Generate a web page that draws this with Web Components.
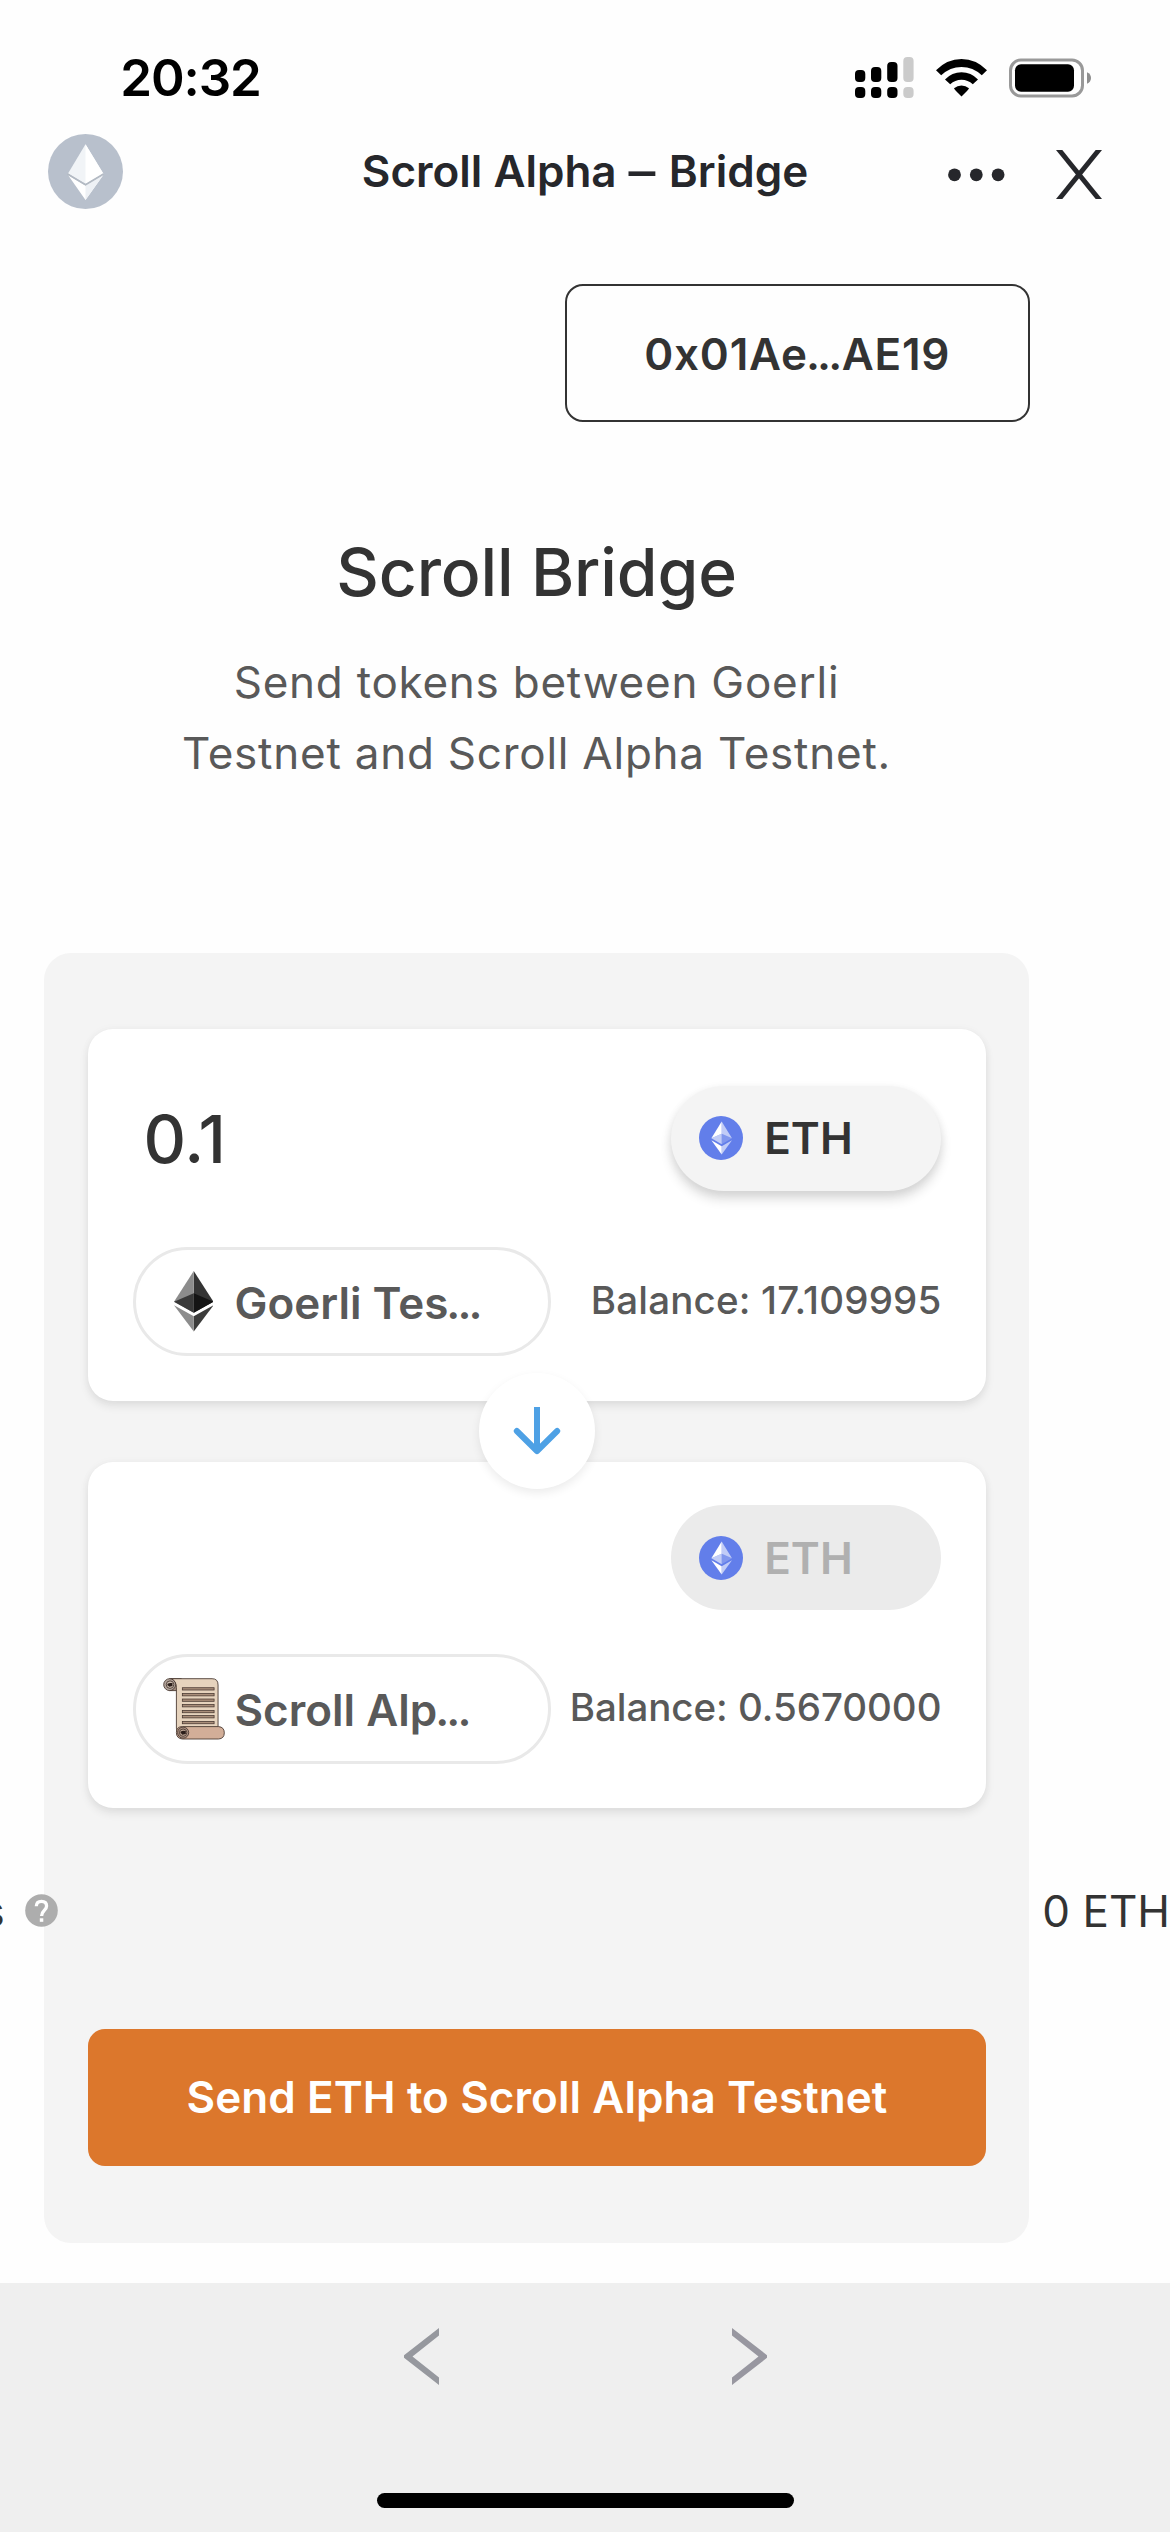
<!DOCTYPE html>
<html lang="en">
<head>
<meta charset="utf-8">
<title>Scroll Alpha – Bridge</title>
<style>
body{margin:0;width:1170px;height:2532px;overflow:hidden;background:#fefefe;font-family:Inter,"Liberation Sans",sans-serif;color:#333}
</style>
</head>
<body>
<bridge-app></bridge-app>
<script>
function define(name, html) {
  const t = document.createElement('template');
  t.innerHTML = html;
  customElements.define(name, class extends HTMLElement {
    constructor() {
      super();
      this.attachShadow({ mode: 'open' }).appendChild(t.content.cloneNode(true));
    }
  });
}

define('status-bar', `<style>
:host{display:flex;box-sizing:border-box;height:134px;padding:21px 79px 0 120.300px;align-items:center;justify-content:space-between;color:#000}
.time{font-size:51px;font-weight:600;letter-spacing:-1.100px;white-space:nowrap}
.icons{display:flex;align-items:center;gap:22px}
svg{display:block}
</style>
<span class="time">20:32</span>
<div class="icons">
<svg width="59" height="42" viewBox="0 0 59 42"><g><rect x="0" y="13" width="10.3" height="12" rx="4"/><rect x="16" y="10" width="10.3" height="15" rx="4"/><rect x="32.2" y="5" width="10.3" height="20" rx="4"/><rect x="0" y="30" width="10.3" height="11" rx="4"/><rect x="16" y="30" width="10.3" height="11" rx="4"/><rect x="32.2" y="30" width="10.3" height="11" rx="4"/></g><g fill="#cbcbcb"><rect x="48.3" y="0" width="10.3" height="25" rx="4"/><rect x="48.3" y="30" width="10.3" height="11" rx="4"/></g></svg>
<svg width="51" height="38" viewBox="0 0 51 38"><path d="M0 11.3Q11 0 25.5 0T51 11.3L45.8 16.2Q37 7.9 25.5 7.9T5.2 16.2Z"/><path d="M9 20.4Q16 13.2 25.5 13.2T42 20.4L36.8 25.3Q32 20.8 25.5 20.8T14.2 25.3Z"/><path d="M18 29.3Q21.4 26.4 25.5 26.4T33 29.3Q33.2 30 25.5 37.6Q17.800 30 18 29.300Z"/></svg>
<svg width="82" height="40" viewBox="0 0 82 40"><rect x="1.5" y="2" width="72" height="36" rx="10.500" fill="none" stroke="#999" stroke-width="3"/><rect x="6" y="6.300" width="59" height="27.400" rx="6"/><path d="M78 14.200Q82 16 82 20T78 25.800Z" fill="#8e8e8e"/></svg>
</div>`);

define('browser-header', `<style>
:host{display:grid;grid-template-columns:1fr auto 1fr;height:75px;align-items:center;color:#26272b}
h1{margin:0;font-size:44px;font-weight:600;letter-spacing:0;line-height:60px;white-space:nowrap;padding-bottom:1px}
.dash{display:inline-block;margin:0 5px 0 3px;transform:scaleX(1.22)}
.left{display:flex;padding-left:48px}
.actions{display:flex;justify-content:flex-end;align-items:center;gap:51px;padding:6px 68px 0 0}
svg{display:block}
</style>
<div class="left"><svg width="75" height="75" viewBox="0 0 75 75"><circle cx="37.500" cy="37.500" r="37.500" fill="#b8c0cc"/><path fill="#f1f4f7" d="M20 39.500L37.500 50 55.300 39.500 37.500 10.300z"/><path fill="#fff" d="M37.500 10.300V50L55.300 39.500z"/><path fill="#fff" d="M20 41L37.500 51.500 55.300 41 37.500 66z"/><path fill="#eef1f5" d="M37.500 51.500L55.300 41 37.500 66z"/><path fill="none" stroke="#b3bac3" stroke-width="1.600" d="M19.500 40L37.500 50.700 55.500 40"/></svg></div>
<h1>Scroll Alpha <span class="dash">–</span> Bridge</h1>
<div class="actions">
<svg width="57" height="14" viewBox="0 0 57 14" fill="#26272b"><circle cx="6.500" cy="6.800" r="6.400"/><circle cx="28.300" cy="6.800" r="6.400"/><circle cx="50.100" cy="6.800" r="6.400"/></svg>
<svg width="46" height="49" viewBox="0 0 46 49" fill="#26272b"><path d="M0 0H6.300L46 49H39.700Z"/><path d="M46 0H39.700L0 49H6.300Z"/></svg>
</div>`);

define('wallet-button', `<style>
:host{display:flex;justify-content:flex-end;margin:75px 140px 0 0;--trail-end:2.500px}
button{all:unset;box-sizing:border-box;width:465.500px;height:138px;border:2.500px solid #333;border-radius:18px;text-align:center;line-height:136px;font-size:44px;font-weight:600;letter-spacing:.750px;white-space:nowrap}
</style><button><slot></slot></button>`);

define('page-hero', `<style>
:host{display:block;width:985px;margin:110px 0 0 44px;text-align:center}
h2{margin:0;font-size:66px;line-height:80px;font-weight:500;letter-spacing:-.150px;white-space:nowrap}
p{margin:35px 0 0;font-size:44px;line-height:70.500px;letter-spacing:.760px;color:#595959;font-weight:400;white-space:nowrap}
</style><h2><slot name="title"></slot></h2><p><slot></slot></p>`);

define('dot-trail', `<style>:host{display:inline;letter-spacing:-2.900px;margin-left:-2px;margin-right:var(--trail-end,0)}</style><slot></slot>`);

define('eth-icon', `<style>:host{display:block;width:44px;height:44px}svg{display:block}</style>
<svg width="44" height="44" viewBox="0 0 32 32"><circle cx="16" cy="16" r="16" fill="#627eea"/><g fill="#fff"><path fill-opacity=".602" d="M16.498 4v8.870l7.497 3.350z"/><path d="M16.498 4L9 16.220l7.498-3.350z"/><path fill-opacity=".602" d="M16.498 21.968v6.027L24 17.616z"/><path d="M16.498 27.995v-6.028L9 17.616z"/><path fill-opacity=".2" d="M16.498 20.573l7.497-4.353-7.497-3.348z"/><path fill-opacity=".602" d="M9 16.220l7.498 4.353v-7.701z"/></g></svg>`);

define('token-chip', `<style>
:host{display:flex;box-sizing:border-box;width:270.500px;height:104.700px;border-radius:53px;padding-left:28px;align-items:center;gap:21.700px;background:#f4f4f4;box-shadow:0 8px 12px rgba(0,0,0,.14),0 2px 10px rgba(0,0,0,.06);font-size:44px;font-weight:600;letter-spacing:0;color:#333}
:host([disabled]){background:#ebebeb;color:#b0b0b0;box-shadow:none}
</style><eth-icon></eth-icon><span><slot></slot></span>`);

define('goerli-icon', `<style>:host{display:block}svg{display:block}</style>
<svg width="39.500" height="60.500" viewBox="0 0 784.370 1277.390" preserveAspectRatio="none"><path fill="#343434" d="M392 0V882L784 650z"/><path fill="#8c8c8c" d="M392 0L0 650 392 882z"/><path fill="#3c3c3b" d="M392 956V1277L784 725z"/><path fill="#8c8c8c" d="M392 1277V956L0 725z"/><path fill="#141414" d="M392 882L784 650 392 472z"/><path fill="#393939" d="M0 650L392 882V472z"/></svg>`);

define('scroll-icon', `<style>:host{display:block}svg{display:block}</style>
<svg width="62" height="62" viewBox="-.500 -.500 62.500 62.500" stroke="#4a3a33" stroke-width=".9">
<path fill="#a58f82" d="M6 .200H18V12.200H6z"/><path fill="#e6d3bd" d="M8 .200H49Q55 .200 55 6.500V56H19Q13 56 13 50V9Q13 3 8 .200z"/>
<circle cx="6.200" cy="6.200" r="6" fill="#b3a59c"/><circle cx="6.600" cy="6.200" r="3.800" fill="#c8b9ac"/><path fill="#2b1e1a" stroke="none" d="M3.800 6.500Q4 3.800 9 4.600V7.500L6 8.300z"/>
<g fill="#a98e7a" stroke-width=".8"><rect x="19" y="9.300" width="32" height="2.300"/><rect x="19" y="15.200" width="32" height="2.300"/><rect x="19" y="20.700" width="32" height="2.300"/><rect x="19" y="26.300" width="32" height="2.300"/><rect x="19" y="32.200" width="32" height="2.300"/><rect x="19" y="37.400" width="32" height="2.300"/><rect x="19" y="43.300" width="32" height="2.300"/></g>
<path fill="#d2ae98" d="M19 48.500H55.500Q61.300 49 61.300 54.800T55.500 61H19Q13 60.500 13 54.500T19 48.500z"/>
<circle cx="19.800" cy="54.600" r="5.600" fill="#a98f80"/><circle cx="19.800" cy="54.600" r="3.700" fill="#c0a897"/><path fill="#2b1e1a" stroke="none" d="M17 54.500Q17.500 51.800 22.500 53V56L19 56.800z"/>
</svg>`);

define('chain-select', `<style>
:host{display:flex;box-sizing:border-box;width:418px;height:109.400px;border:3px solid #e9e9e9;border-radius:55px;align-items:center;padding-left:26px;gap:9px;font-size:44px;font-weight:600;letter-spacing:0;color:#595959;white-space:nowrap}
.icon{width:64px;display:flex;justify-content:center}.label{padding-top:2px}
</style><div class="icon"><slot name="icon"></slot></div><span class="label"><slot></slot></span>`);

define('token-card', `<style>
:host{display:flex;flex-direction:column;box-sizing:border-box;height:371.400px;gap:56.300px;padding:56.700px 45px 0 44.500px;background:#fff;border-radius:25px;box-shadow:0 5px 10px rgba(0,0,0,.085),0 0 10px rgba(0,0,0,.03)}
:host([receive]){height:346.300px;padding-top:43.600px;gap:44.300px}
.row{display:flex;justify-content:space-between;align-items:center}
.amount{font-size:66px;font-weight:500;line-height:80px;margin:2px 0 0 11px}
.balance{font-size:38.500px;font-weight:450;letter-spacing:.180px;color:#595959;margin:-3px -.500px 0 0;white-space:nowrap}
:host([receive]) .balance{letter-spacing:-.040px}
</style>
<div class="row"><span class="amount"><slot name="amount"></slot></span><slot name="token"></slot></div>
<div class="row"><slot name="chain"></slot><span class="balance"><slot name="balance"></slot></span></div>`);

define('swap-arrow', `<style>
:host{display:flex;height:61px;justify-content:center;align-items:center;position:relative;z-index:1}
div{flex:none;width:116px;height:116px;border-radius:50%;background:#fff;box-shadow:0 4px 10px rgba(0,0,0,.08);display:flex;align-items:center;justify-content:center}
svg{display:block}
</style><div><svg width="48" height="48" viewBox="0 0 48 48" fill="none" stroke="#4ea1e5" stroke-width="6" stroke-linejoin="round"><path d="M24 0V44"/><path stroke-linecap="round" d="M3.800 24L24 44 44.200 24"/></svg></div>`);

define('fee-row', `<style>
:host{display:flex;width:1170px;height:40px;margin:83px 0 0 -88px;align-items:center;justify-content:space-between}
.key{display:flex;align-items:center;gap:20.200px;margin-left:-25.200px}
.name{width:30px;display:flex;justify-content:flex-end;font-size:44px;font-weight:400;line-height:40px}
.fee{font-size:44px;font-weight:400;letter-spacing:0;line-height:40px;white-space:nowrap}
svg{display:block}
</style><div class="key"><span class="name"><slot name="name"></slot></span><svg width="33" height="33" viewBox="0 0 33 33"><circle cx="16.500" cy="16.500" r="16.300" fill="#adadad"/><path d="M11.300 12.200Q11.500 7.300 16.500 7.300T21.600 12Q21.600 14.300 19.200 16.400T16.600 22" fill="none" stroke="#fff" stroke-width="3.300"/><rect x="14.800" y="24.300" width="3.500" height="3.500" fill="#fff"/></svg></div><span class="fee"><slot></slot></span>`);

define('send-button', `<style>
:host{display:block;margin-top:97.700px}
button{all:unset;display:flex;width:100%;height:137.300px;border-radius:17px;background:#dc772c;color:#fff;align-items:center;justify-content:center;font-size:44px;font-weight:600;letter-spacing:.080px;white-space:nowrap}
</style><button><slot></slot></button>`);

define('bridge-panel', `<style>
:host{display:block;box-sizing:border-box;width:985px;height:1290px;margin:165px 0 0 44px;padding:76.300px 43px 0 44px;border-radius:27px;background:#f4f4f4}
</style><slot></slot>`);

define('nav-footer', `<style>
:host{display:flex;flex-direction:column;align-items:center;justify-content:space-between;box-sizing:border-box;height:249px;margin-top:auto;padding:45px 0 24.500px;background:#efefef}
.nav{display:flex;gap:293px}svg{display:block}.home{width:417px;height:14.700px;border-radius:8px;background:#000}
</style><div class="nav">
<svg width="35" height="57" viewBox="0 0 35 57"><path d="M35 0V7.500L8.500 28.500 35 49.500V57L0 29.800V27.200z" fill="#96989e"/></svg>
<svg width="35" height="57" viewBox="0 0 35 57"><path d="M0 0V7.500L26.500 28.500 0 49.500V57L35 29.800V27.200z" fill="#9897a0"/></svg>
</div><div class="home"></div>`);

define('bridge-app', `<style>:host{display:flex;flex-direction:column;height:2532px;overflow:hidden}</style>
<status-bar></status-bar>
<browser-header></browser-header>
<wallet-button>0x01Ae<dot-trail>...</dot-trail>AE19</wallet-button>
<page-hero><span slot="title">Scroll Bridge</span>Send tokens between Goerli<br>Testnet and Scroll Alpha Testnet.</page-hero>
<bridge-panel>
<token-card><span slot="amount">0.1</span><token-chip slot="token">ETH</token-chip><chain-select slot="chain"><goerli-icon slot="icon"></goerli-icon>Goerli Tes<dot-trail>...</dot-trail></chain-select><span slot="balance">Balance: 17.109995</span></token-card>
<swap-arrow></swap-arrow>
<token-card receive><token-chip slot="token" disabled>ETH</token-chip><chain-select slot="chain"><scroll-icon slot="icon"></scroll-icon>Scroll Alp<dot-trail>...</dot-trail></chain-select><span slot="balance">Balance: 0.5670000</span></token-card>
<fee-row><span slot="name">s</span>0 ETH</fee-row>
<send-button>Send ETH to Scroll Alpha Testnet</send-button>
</bridge-panel>
<nav-footer></nav-footer>`);
</script>
</body>
</html>
